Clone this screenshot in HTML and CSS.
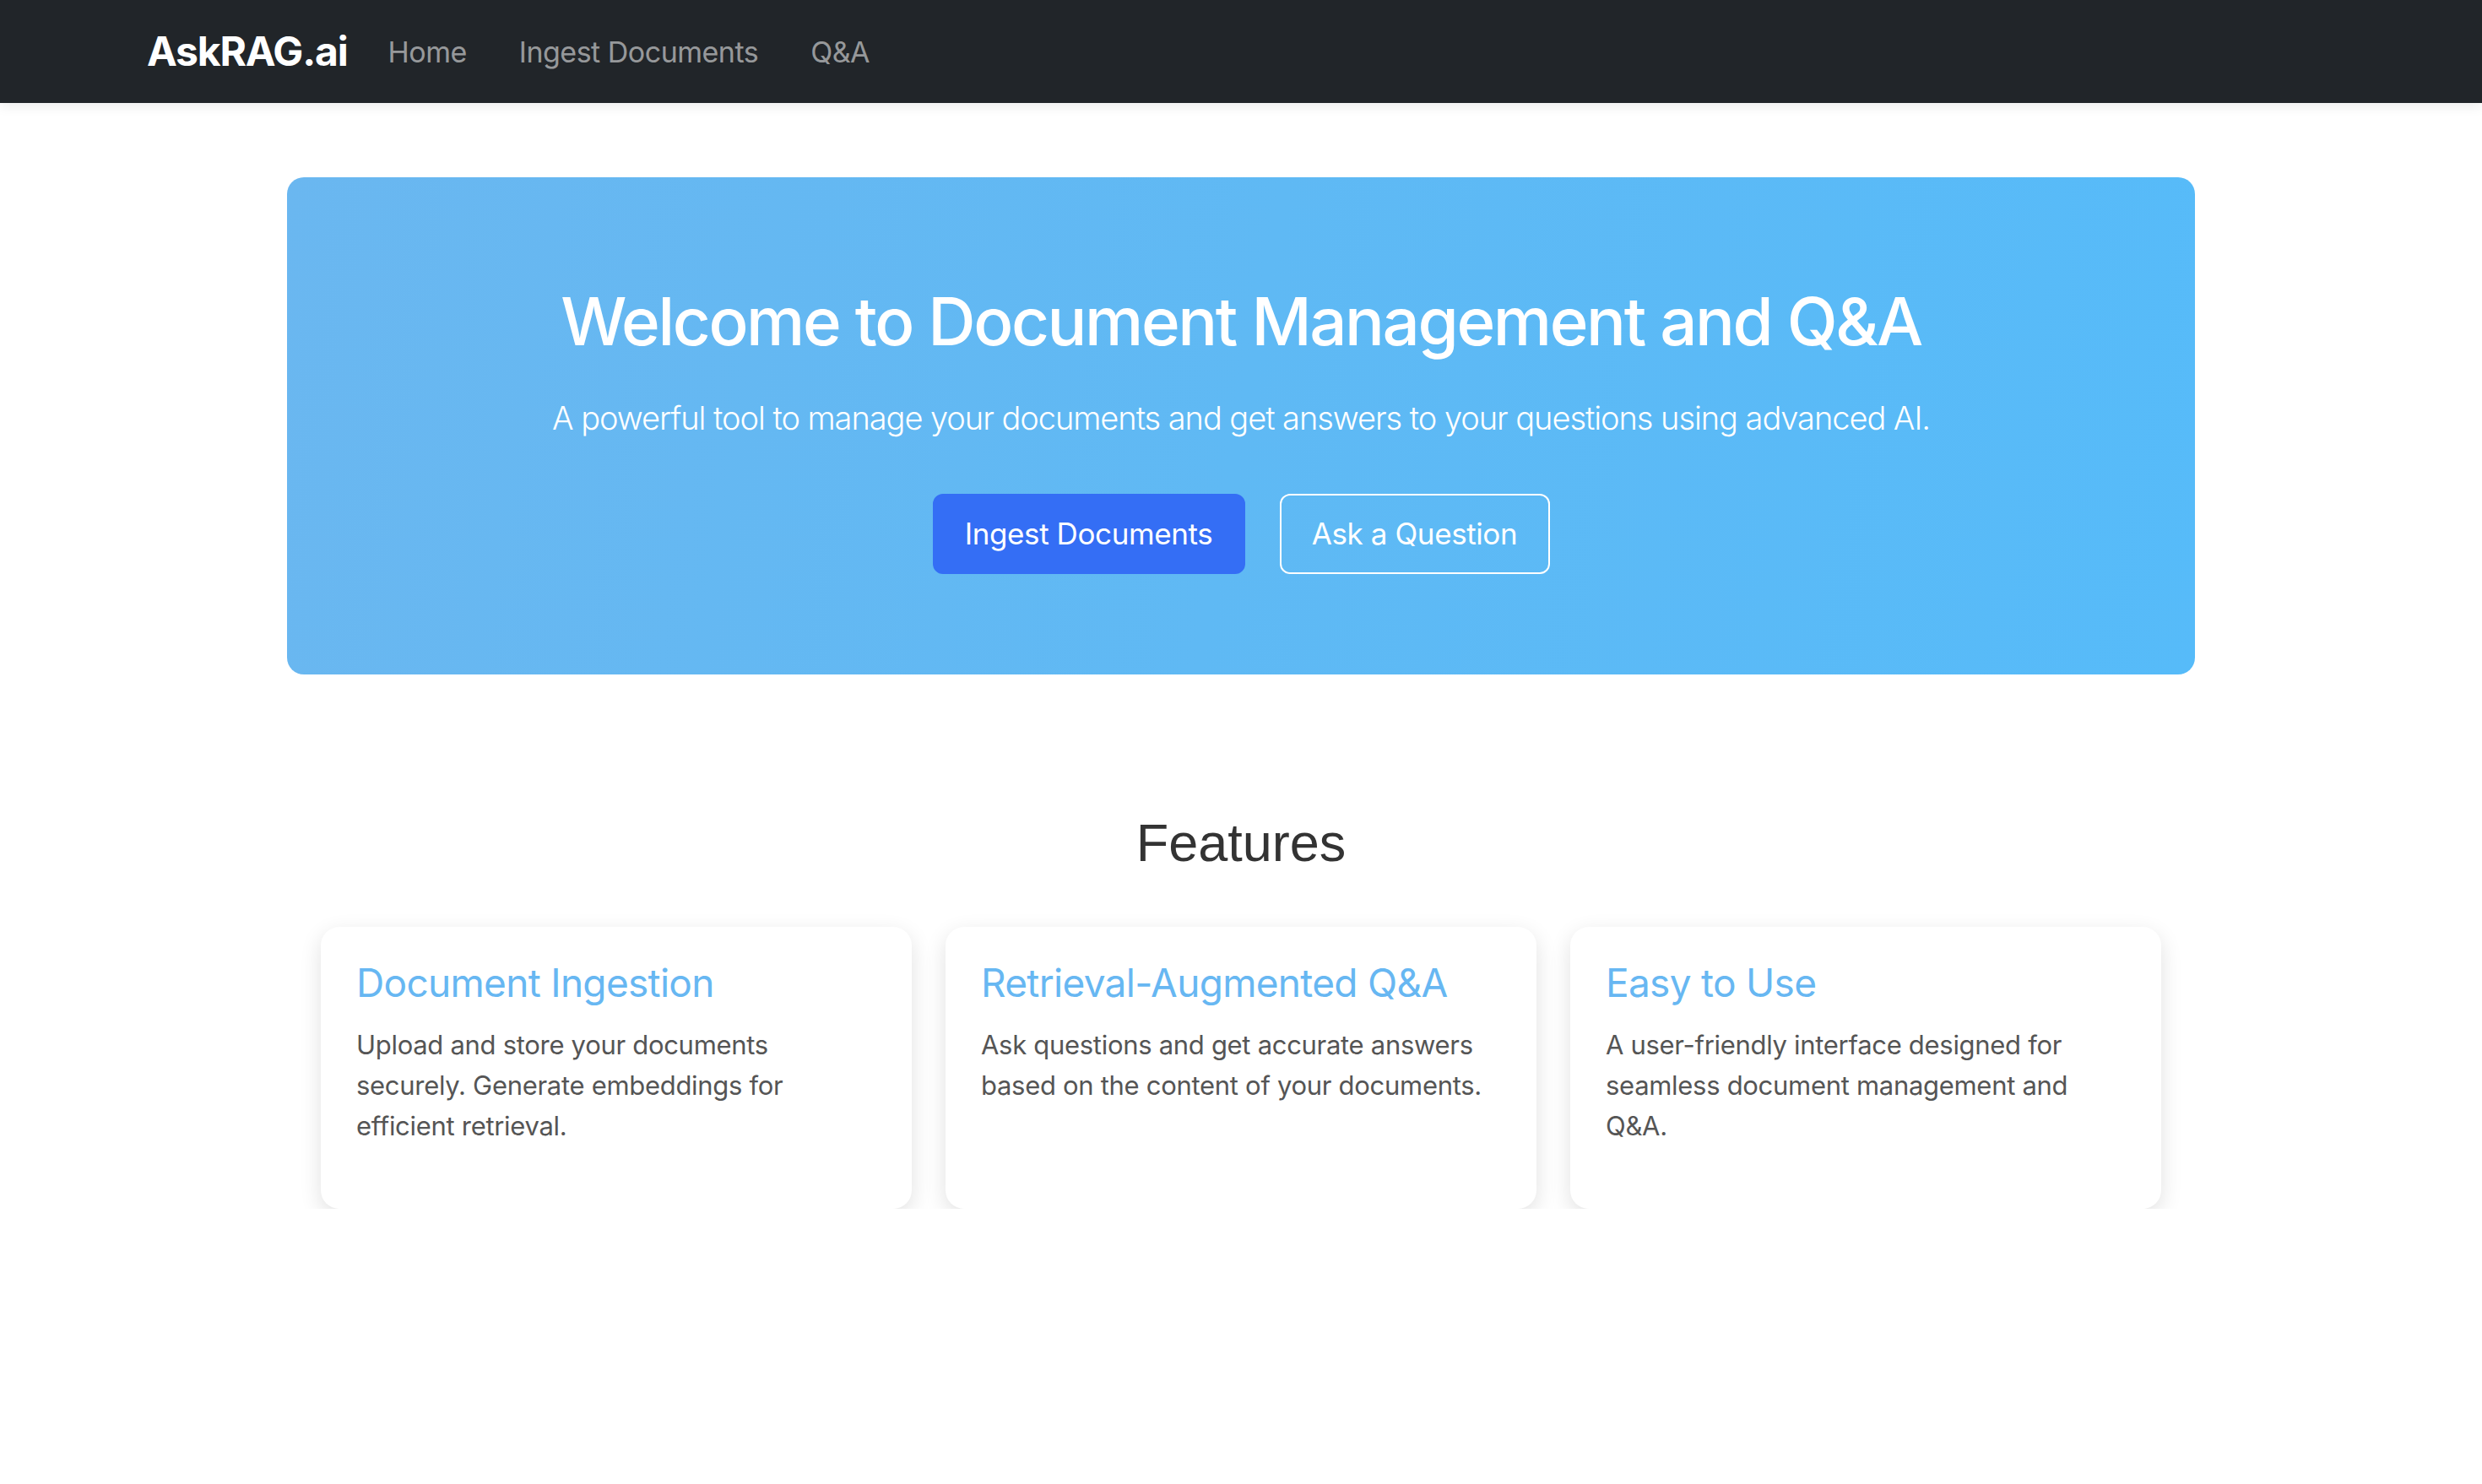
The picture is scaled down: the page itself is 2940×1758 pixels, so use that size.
FILE: index.html
```html
<!DOCTYPE html>
<html lang="en">
<head>
<meta charset="utf-8">
<title>AskRAG.ai</title>
<link rel="stylesheet" href="styles.css">
</head>
<body>
<nav class="navbar">
  <div class="nav-inner">
    <a class="brand" href="#">AskRAG.ai</a>
    <div class="nav-links">
      <a class="nav-link" href="#">Home</a>
      <a class="nav-link" href="#">Ingest Documents</a>
      <a class="nav-link" href="#">Q&amp;A</a>
    </div>
  </div>
</nav>
<main class="main">
  <section class="hero">
    <h1 class="hero-title">Welcome to Document Management and Q&amp;A</h1>
    <p class="hero-lead">A powerful tool to manage your documents and get answers to your questions using advanced AI.</p>
    <div class="hero-actions">
      <a class="btn btn-primary" href="#">Ingest Documents</a>
      <a class="btn btn-outline" href="#">Ask a Question</a>
    </div>
  </section>
  <section class="features">
    <h2 class="features-title">Features</h2>
    <div class="cards">
      <div class="card">
        <h3 class="card-title">Document Ingestion</h3>
        <p class="card-text">Upload and store your documents securely. Generate embeddings for efficient retrieval.</p>
      </div>
      <div class="card">
        <h3 class="card-title">Retrieval-Augmented Q&amp;A</h3>
        <p class="card-text">Ask questions and get accurate answers based on the content of your documents.</p>
      </div>
      <div class="card">
        <h3 class="card-title">Easy to Use</h3>
        <p class="card-text">A user-friendly interface designed for seamless document management and Q&amp;A.</p>
      </div>
    </div>
  </section>
</main>
</body>
</html>
```
FILE: styles.css
```css
* { box-sizing: border-box; }
html, body { margin: 0; padding: 0; }
body {
  background: #ffffff;
  font-family: Inter, "Noto Sans", "Liberation Sans", sans-serif;
  color: #212529;
}
a { text-decoration: none; }

.navbar {
  background: #212529;
  height: 122px;
  box-shadow: 0 4px 14px rgba(0, 0, 0, 0.08);
  position: relative;
  z-index: 2;
}
.nav-inner {
  max-width: 2640px;
  margin: 0 auto;
  padding: 0 24px;
  height: 100%;
  display: flex;
  align-items: center;
}
.brand {
  color: #ffffff;
  font-weight: 700;
  font-size: 48px;
  letter-spacing: -1.2px;
  margin-right: 48px;
  padding-bottom: 2px;
}
.nav-links {
  display: flex;
  align-items: center;
  gap: 62px;
}
.nav-link {
  color: rgba(255, 255, 255, 0.55);
  font-size: 34px;
  letter-spacing: -0.5px;
}

.main {
  width: 2260px;
  margin: 0 auto;
}

.hero {
  margin-top: 88px;
  border-radius: 20px;
  background: linear-gradient(100deg, #6ab7f0 0%, #5fb9f4 50%, #56bbf9 100%);
  padding: 124px 40px 119px;
  text-align: center;
  color: #ffffff;
}
.hero-title {
  margin: 0 0 39px;
  font-size: 78px;
  font-weight: 500;
  line-height: 1.2;
  letter-spacing: -2.4px;
}
.hero-lead {
  margin: 0 0 61px;
  font-size: 38px;
  font-weight: 300;
  line-height: 1.5;
  letter-spacing: -1.05px;
}
.hero-actions {
  display: flex;
  justify-content: center;
  gap: 41px;
}
.btn {
  display: inline-flex;
  align-items: center;
  justify-content: center;
  height: 95px;
  padding: 0;
  border-radius: 12px;
  font-size: 35px;
  letter-spacing: -0.4px;
  white-space: nowrap;
  color: #ffffff;
}
.btn-primary {
  background: #346ef5;
  border: 2px solid #346ef5;
  width: 370px;
}
.btn-outline {
  background: transparent;
  border: 2px solid #ffffff;
  width: 320px;
}

.features {
  margin-top: 162px;
}
.features-title {
  margin: 0 0 62px;
  text-align: center;
  font-family: "Liberation Sans", Arial, sans-serif;
  font-weight: 400;
  font-size: 63px;
  line-height: 1.2;
  color: #333333;
}
.cards {
  display: grid;
  grid-template-columns: repeat(3, 1fr);
  gap: 40px;
  padding: 0 40px;
}
.card {
  background: #ffffff;
  border-radius: 22px;
  box-shadow: 0 8px 26px rgba(0, 0, 0, 0.12);
  padding: 37px 42px 40px;
  min-height: 334px;
}
.card-title {
  margin: 0 0 19px;
  font-size: 46px;
  font-weight: 400;
  line-height: 1.3;
  letter-spacing: -0.7px;
  color: #67b7f2;
}
.card-text {
  margin: 0;
  font-size: 31px;
  line-height: 48px;
  color: #555555;
  letter-spacing: -0.3px;
}
```
